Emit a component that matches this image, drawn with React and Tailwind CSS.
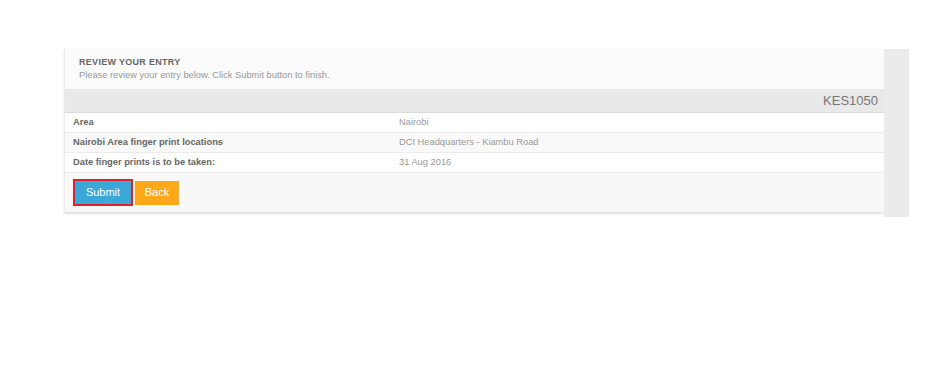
export default function App() {
  const rows = [
    { label: 'Area', value: 'Nairobi' },
    { label: 'Nairobi Area finger print locations', value: 'DCI Headquarters - Kiambu Road' },
    { label: 'Date finger prints is to be taken:', value: '31 Aug 2016' },
  ];

  return (
    <div className="w-[946px] h-[376px] bg-white pt-[49px] pl-[64px] font-['Liberation_Sans',Arial,sans-serif]">
      <div className="flex items-start">
        <div className="w-[820px] bg-[#fbfbfb] border-l border-[#ececec] shadow-[0_2px_2px_rgba(0,0,0,0.12)]">
          <div className="h-[40px] pl-[14px] pt-[7px]">
            <div className="text-[9px] font-bold text-[#666] tracking-[0.3px] leading-[13px]">REVIEW YOUR ENTRY</div>
            <div className="text-[9.3px] text-[#999] leading-[12px]">Please review your entry below. Click Submit button to finish.</div>
          </div>
          <div className="h-[24px] bg-[#e9e9e9] border-b border-[#dcdcdc] flex items-center justify-end pr-[6px]">
            <span className="text-[13px] text-[#777]">KES1050</span>
          </div>
          {rows.map((r, i) => (
            <div
              key={r.label}
              className={`h-[20px] flex items-center border-b border-[#ececec] text-[9.3px] ${i % 2 === 1 ? 'bg-[#f9f9f9]' : 'bg-white'}`}
            >
              <div className="w-[334px] pl-[8px] font-bold text-[#666]">{r.label}</div>
              <div className="text-[#999]">{r.value}</div>
            </div>
          ))}
          <div className="h-[39px] bg-[#f8f8f8] flex items-center gap-[2px] pl-[8px]">
            <button className="h-[27px] w-[60px] border-2 border-[#e0202a] bg-[#3aa9d9] text-white text-[11px]">Submit</button>
            <button className="h-[24px] w-[44px] bg-[#ffa81a] text-white text-[11px]">Back</button>
          </div>
        </div>
        <div className="w-[25px] h-[168px] bg-[#ebebeb]"></div>
      </div>
    </div>
  );
}
